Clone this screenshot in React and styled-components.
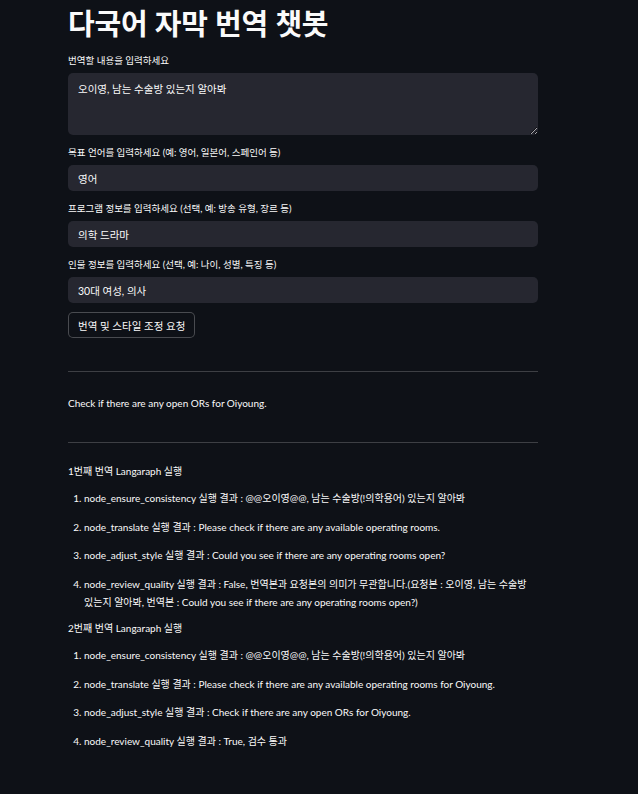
import React from "react";
import styled, { createGlobalStyle } from "styled-components";

const GlobalStyle = createGlobalStyle`
  html, body {
    margin: 0;
    padding: 0;
    background: #0e1117;
  }
  body {
    font-family: Lato, "Noto Sans CJK KR", sans-serif;
    color: #fafafa;
  }
`;

const Page = styled.main`
  min-height: 794px;
  background: #0e1117;
  display: flex;
  justify-content: flex-start;
`;

const Column = styled.div`
  width: 470px;
  margin-left: 68px;
  display: flex;
  flex-direction: column;
`;

const Title = styled.h1`
  margin: 6px 0 0;
  font-family: "Noto Sans", "Noto Sans CJK KR", sans-serif;
  font-size: 29px;
  line-height: 36px;
  font-weight: 700;
  letter-spacing: -0.2px;
  color: #fafafa;
`;

const Field = styled.div`
  display: flex;
  flex-direction: column;
  margin-top: ${(p) => p.$top || 12}px;
`;

const Label = styled.label`
  font-size: 9.5px;
  line-height: 12px;
  margin-bottom: 6px;
  color: #fafafa;
`;

const TextArea = styled.textarea`
  box-sizing: border-box;
  width: 100%;
  height: 62px;
  background: #262730;
  border: none;
  border-radius: 5px;
  color: #fafafa;
  font-family: inherit;
  font-size: 10.5px;
  line-height: 16px;
  padding: 8px 10px;
  outline: none;
`;

const Input = styled.input`
  box-sizing: border-box;
  width: 100%;
  height: 26px;
  background: #262730;
  border: none;
  border-radius: 5px;
  color: #fafafa;
  font-family: inherit;
  font-size: 10.5px;
  padding: 0 10px;
  outline: none;
`;

const Button = styled.button`
  align-self: flex-start;
  margin-top: 9px;
  height: 26px;
  padding: 0 9px;
  background: #0e1117;
  border: 1px solid rgba(250, 250, 250, 0.25);
  border-radius: 5px;
  color: #fafafa;
  font-family: inherit;
  font-size: 10.5px;
`;

const Rule = styled.hr`
  width: 100%;
  margin: ${(p) => p.$top}px 0 0;
  border: none;
  border-top: 1px solid rgba(250, 250, 250, 0.2);
`;

const Para = styled.p`
  margin: ${(p) => p.$top}px 0 0;
  font-size: 10px;
  line-height: 14px;
`;

const List = styled.ol`
  margin: 11px 0 0;
  padding-left: 16px;
  font-size: 10px;
  line-height: 18px;
  li {
    margin-bottom: 10.5px;
  }
`;

const runs = [
  {
    title: "1번째 번역 Langaraph 실행",
    items: [
      ["node_ensure_consistency", "@@오이영@@, 남는 수술방(!의학용어) 있는지 알아봐"],
      ["node_translate", "Please check if there are any available operating rooms."],
      ["node_adjust_style", "Could you see if there are any operating rooms open?"],
      [
        "node_review_quality",
        "False, 번역본과 요청본의 의미가 무관합니다.(요청본 : 오이영, 남는 수술방 있는지 알아봐, 번역본 : Could you see if there are any operating rooms open?)",
      ],
    ],
  },
  {
    title: "2번째 번역 Langaraph 실행",
    items: [
      ["node_ensure_consistency", "@@오이영@@, 남는 수술방(!의학용어) 있는지 알아봐"],
      ["node_translate", "Please check if there are any available operating rooms for Oiyoung."],
      ["node_adjust_style", "Check if there are any open ORs for Oiyoung."],
      ["node_review_quality", "True, 검수 통과"],
    ],
  },
];

export default function App() {
  return (
    <>
      <GlobalStyle />
      <Page>
        <Column>
          <Title>다국어 자막 번역 챗봇</Title>
          <Field $top={13}>
            <Label>번역할 내용을 입력하세요</Label>
            <TextArea readOnly value="오이영, 남는 수술방 있는지 알아봐" />
          </Field>
          <Field $top={12}>
            <Label>목표 언어를 입력하세요 (예: 영어, 일본어, 스페인어 등)</Label>
            <Input readOnly value="영어" />
          </Field>
          <Field $top={12}>
            <Label>프로그램 정보를 입력하세요 (선택, 예: 방송 유형, 장르 등)</Label>
            <Input readOnly value="의학 드라마" />
          </Field>
          <Field $top={12}>
            <Label>인물 정보를 입력하세요 (선택, 예: 나이, 성별, 특징 등)</Label>
            <Input readOnly value="30대 여성, 의사" />
          </Field>
          <Button>번역 및 스타일 조정 요청</Button>
          <Rule $top={33} />
          <Para $top={24}>Check if there are any open ORs for Oiyoung.</Para>
          <Rule $top={32} />
          {runs.map((run, i) => (
            <React.Fragment key={run.title}>
              <Para $top={i === 0 ? 21 : 0}>{run.title}</Para>
              <List>
                {run.items.map(([node, result]) => (
                  <li key={node}>
                    {node} 실행 결과 : {result}
                  </li>
                ))}
              </List>
            </React.Fragment>
          ))}
        </Column>
      </Page>
    </>
  );
}
